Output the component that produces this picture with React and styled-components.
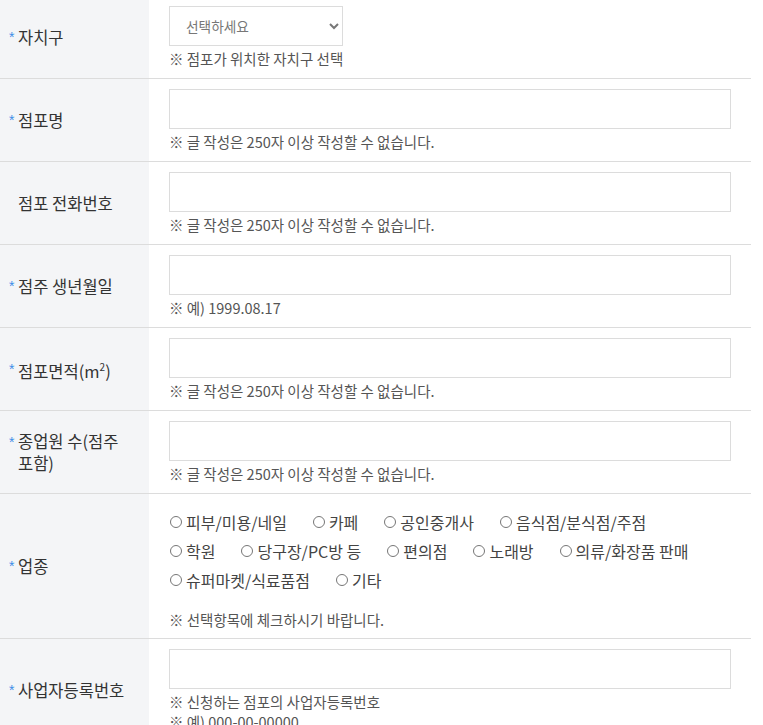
import React from "react";
import styled, { createGlobalStyle } from "styled-components";

const GlobalStyle = createGlobalStyle`
  html, body {
    margin: 0;
    padding: 0;
    background: #fff;
    overflow: hidden;
  }
  body {
    font-family: "Noto Sans CJK KR", "Noto Sans", sans-serif;
    color: #333;
  }
`;

const FormTable = styled.div`
  width: 751px;
  margin-top: -4px;
`;

const Row = styled.div`
  display: grid;
  grid-template-columns: 149px 1fr;
  border-bottom: 1px solid #dcdcdc;
`;

const Label = styled.div`
  display: flex;
  align-items: center;
  background: #f4f5f7;
  padding: 0 14px 0 9px;
  font-size: 16.5px;
  line-height: 22px;
  color: #333;
`;

const Star = styled.span`
  flex: 0 0 9px;
  align-self: center;
  margin-top: ${(p) => (p.$wrap ? "-20px" : "-1px")};
  font-family: "Liberation Sans", sans-serif;
  font-size: 14px;
  line-height: 1;
  color: #3d8ee8;
`;

const LabelText = styled.span`
  flex: 1;
  word-break: keep-all;

  sup {
    font-size: 10px;
  }
`;

const Cell = styled.div`
  padding: 10px 20px 9px;
`;

const TextInput = styled.input`
  display: block;
  box-sizing: border-box;
  width: 100%;
  height: 40px;
  border: 1px solid #dcdcdc;
  background: #fff;
  outline: none;
`;

const Select = styled.select`
  display: block;
  box-sizing: border-box;
  width: 174px;
  height: 40px;
  padding: 0 10px 0 12px;
  border: 1px solid #dcdcdc;
  border-radius: 0;
  background: #fff;
  font-family: "Noto Sans CJK KR", sans-serif;
  font-size: 13.7px;
  color: #777;
`;

const Note = styled.p`
  margin: ${(p) => (p.$tight ? "0" : "3px")} 0 0;
  font-size: 14.5px;
  line-height: 20px;
  color: #555;
`;

const RadioCell = styled.div`
  padding: 13px 20px 8px;
`;

const RadioGroup = styled.div`
  display: flex;
  flex-wrap: wrap;
  max-width: 540px;
  column-gap: 25px;
`;

const RadioItem = styled.label`
  display: inline-flex;
  align-items: center;
  height: 29px;
  font-size: 16px;
  color: #444;

  input {
    width: 12px;
    height: 12px;
    margin: 0 4px 0 1px;
  }
`;

const RadioNote = styled(Note)`
  margin-top: 16px;
`;

const kinds = [
  "피부/미용/네일",
  "카페",
  "공인중개사",
  "음식점/분식점/주점",
  "학원",
  "당구장/PC방 등",
  "편의점",
  "노래방",
  "의류/화장품 판매",
  "슈퍼마켓/식료품점",
  "기타",
];

const LIMIT = "※ 글 작성은 250자 이상 작성할 수 없습니다.";

function Field({ label, required, wrap, children }) {
  return (
    <Row>
      <Label>
        <Star $wrap={wrap}>{required ? "*" : ""}</Star>
        <LabelText>{label}</LabelText>
      </Label>
      {children}
    </Row>
  );
}

export default function App() {
  return (
    <>
      <GlobalStyle />
      <FormTable>
        <Field label="자치구" required>
          <Cell>
            <Select defaultValue="">
              <option value="">선택하세요</option>
            </Select>
            <Note>※ 점포가 위치한 자치구 선택</Note>
          </Cell>
        </Field>
        <Field label="점포명" required>
          <Cell>
            <TextInput type="text" />
            <Note>{LIMIT}</Note>
          </Cell>
        </Field>
        <Field label="점포 전화번호">
          <Cell>
            <TextInput type="text" />
            <Note>{LIMIT}</Note>
          </Cell>
        </Field>
        <Field label="점주 생년월일" required>
          <Cell>
            <TextInput type="text" />
            <Note>※ 예) 1999.08.17</Note>
          </Cell>
        </Field>
        <Field
          label={
            <>
              점포면적(m<sup>2</sup>)
            </>
          }
          required
        >
          <Cell>
            <TextInput type="text" />
            <Note>{LIMIT}</Note>
          </Cell>
        </Field>
        <Field label="종업원 수(점주 포함)" required wrap>
          <Cell>
            <TextInput type="text" />
            <Note>{LIMIT}</Note>
          </Cell>
        </Field>
        <Field label="업종" required>
          <RadioCell>
            <RadioGroup>
              {kinds.map((k) => (
                <RadioItem key={k}>
                  <input type="radio" name="kind" value={k} />
                  {k}
                </RadioItem>
              ))}
            </RadioGroup>
            <RadioNote>※ 선택항목에 체크하시기 바랍니다.</RadioNote>
          </RadioCell>
        </Field>
        <Field label="사업자등록번호" required>
          <Cell>
            <TextInput type="text" />
            <Note>※ 신청하는 점포의 사업자등록번호</Note>
            <Note $tight>※ 예) 000-00-00000</Note>
          </Cell>
        </Field>
      </FormTable>
    </>
  );
}
